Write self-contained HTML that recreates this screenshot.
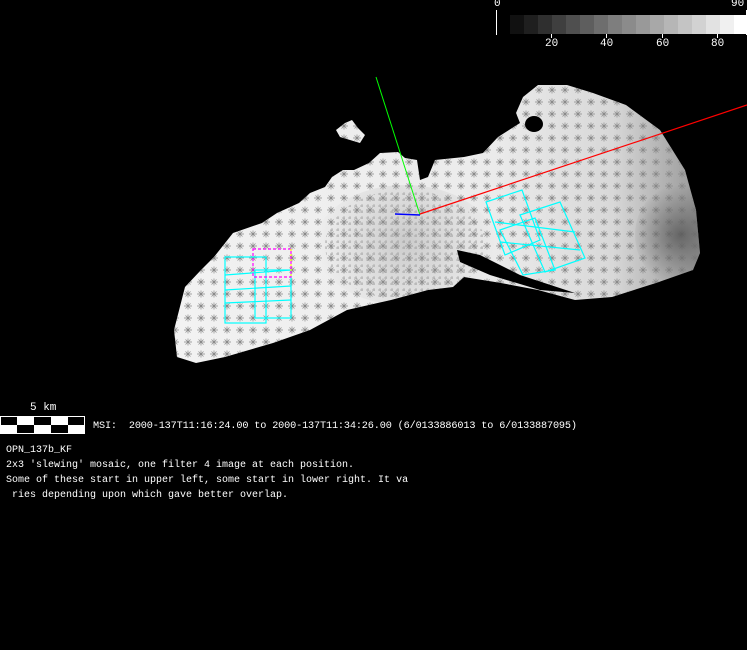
<!DOCTYPE html>
<html><head><meta charset="utf-8"><style>
html,body{margin:0;padding:0;background:#000;width:747px;height:650px;overflow:hidden;position:relative}
.t{position:absolute;color:#fff;font-family:"Liberation Mono",monospace;font-size:10px;white-space:pre;line-height:15px}
</style></head><body>
<svg width="747" height="650" style="position:absolute;left:0;top:0">
<defs>
<pattern id="m" width="13" height="12" patternUnits="userSpaceOnUse">
<path d="M2 6h8M6 2.5v7M3.5 3.5l5 5M8.5 3.5l-5 5" stroke="#888" stroke-width="0.7" fill="none"/>
</pattern>
<pattern id="d" width="6" height="6" patternUnits="userSpaceOnUse">
<path d="M0 2h3M2 0v3" stroke="#888" stroke-width="0.7"/>
</pattern>
<linearGradient id="g" x1="0" y1="0" x2="1" y2="0">
<stop offset="0" stop-color="#f2f2f2"/><stop offset="0.6" stop-color="#ebebeb"/><stop offset="0.82" stop-color="#d8d8d8"/><stop offset="1" stop-color="#909090"/>
</linearGradient>
<radialGradient id="r" cx="405" cy="240" r="90" gradientUnits="userSpaceOnUse">
<stop offset="0" stop-color="#999" stop-opacity="0.8"/><stop offset="1" stop-color="#999" stop-opacity="0"/>
</radialGradient>
<radialGradient id="r2" cx="680" cy="235" r="50" gradientUnits="userSpaceOnUse">
<stop offset="0" stop-color="#555" stop-opacity="0.8"/><stop offset="1" stop-color="#666" stop-opacity="0"/>
</radialGradient>
<clipPath id="c"><polygon points="174,330 185,287 201,270 214,257 233,233 262,223 277,213 299,203 310,193 325,187 332,177 343,170 354,170 369,163 380,153 398,152 405,158 417,160 420,180 428,177 435,160 464,157 483,153 498,137 520,123 516,113 523,97 538,85 567,85 593,93 626,105 660,130 685,170 696,210 700,253 693,270 656,283 612,297 575,300 538,290 501,283 464,277 453,287 428,290 391,300 347,310 310,330 273,343 225,357 196,363 177,357"/></clipPath>
</defs>
<g clip-path="url(#c)">
<rect x="170" y="80" width="540" height="290" fill="url(#g)"/>
<rect x="170" y="80" width="540" height="290" fill="url(#m)"/>
<ellipse cx="405" cy="245" rx="80" ry="55" fill="url(#d)" opacity="0.7"/>
<ellipse cx="405" cy="245" rx="90" ry="60" fill="url(#r)" opacity="0.5"/>
<ellipse cx="680" cy="235" rx="45" ry="50" fill="url(#r2)"/>
</g>
<polygon points="336,130 345,123 352,120 358,128 365,135 360,143 350,140 340,137" fill="#eee"/>
<polygon points="336,130 345,123 352,120 358,128 365,135 360,143 350,140 340,137" fill="url(#m)"/>
<ellipse cx="534" cy="124" rx="9" ry="8" fill="#000"/>
<polygon points="457,250 480,255 520,275 575,293 540,290 490,275 460,262" fill="#000"/>
<g fill="none" stroke="#0ff" stroke-width="1.2">
<rect x="225" y="257" width="41" height="66"/>
<rect x="255" y="270" width="36" height="48"/>
<line x1="225" y1="275" x2="291" y2="270"/><line x1="225" y1="290" x2="291" y2="286"/><line x1="225" y1="303" x2="291" y2="300"/>
<polygon points="486,202 522,190 540,240 505,255"/>
<polygon points="520,215 560,202 585,258 545,272"/>
<polygon points="500,230 535,218 555,270 523,275"/>
<line x1="495" y1="222" x2="575" y2="232"/><line x1="500" y1="242" x2="580" y2="250"/>
</g>
<rect x="253" y="249" width="38" height="28" fill="none" stroke="#f0f" stroke-width="1.2" stroke-dasharray="3,2"/>
<line x1="291" y1="249" x2="291" y2="277" stroke="#ff0" stroke-width="1.2" stroke-dasharray="2,3"/>
<line x1="376" y1="77" x2="420" y2="215" stroke="#0f0" stroke-width="1"/>
<line x1="420" y1="214" x2="747" y2="105" stroke="#f00" stroke-width="1.2"/>
<line x1="395" y1="214" x2="420" y2="215" stroke="#00f" stroke-width="1.5"/>
<g>
<line x1="496.5" y1="10" x2="496.5" y2="35" stroke="#fff"/>
<line x1="746.5" y1="10" x2="746.5" y2="35" stroke="#fff"/>
<rect x="510" y="15" width="14" height="19" fill="#111"/>
<rect x="524" y="15" width="14" height="19" fill="#1f1f1f"/>
<rect x="538" y="15" width="14" height="19" fill="#2f2f2f"/>
<rect x="552" y="15" width="14" height="19" fill="#3f3f3f"/>
<rect x="566" y="15" width="14" height="19" fill="#4f4f4f"/>
<rect x="580" y="15" width="14" height="19" fill="#5e5e5e"/>
<rect x="594" y="15" width="14" height="19" fill="#6e6e6e"/>
<rect x="608" y="15" width="14" height="19" fill="#7e7e7e"/>
<rect x="622" y="15" width="14" height="19" fill="#8b8b8b"/>
<rect x="636" y="15" width="14" height="19" fill="#999"/>
<rect x="650" y="15" width="14" height="19" fill="#a8a8a8"/>
<rect x="664" y="15" width="14" height="19" fill="#b6b6b6"/>
<rect x="678" y="15" width="14" height="19" fill="#c4c4c4"/>
<rect x="692" y="15" width="14" height="19" fill="#d2d2d2"/>
<rect x="706" y="15" width="14" height="19" fill="#e2e2e2"/>
<rect x="720" y="15" width="14" height="19" fill="#f0f0f0"/>
<rect x="734" y="15" width="12" height="19" fill="#fff"/>
<g stroke="#fff"><line x1="551.5" y1="34" x2="551.5" y2="38"/><line x1="606.5" y1="34" x2="606.5" y2="38"/><line x1="662.5" y1="34" x2="662.5" y2="38"/><line x1="717.5" y1="34" x2="717.5" y2="38"/></g>
</g>
<rect x="0.5" y="416.5" width="84" height="17" fill="#fff" stroke="#fff"/>
<g fill="#000">
<rect x="1" y="417" width="16" height="8"/><rect x="34" y="417" width="17" height="8"/><rect x="68" y="417" width="16" height="8"/>
<rect x="17" y="425" width="17" height="8"/><rect x="51" y="425" width="17" height="8"/>
</g>
</svg>
<div class="t" style="left:494px;top:-3px;font-size:11px">0</div>
<div class="t" style="left:731px;top:-3px;font-size:11px">90</div>
<div class="t" style="left:545px;top:37px;font-size:11px">20</div>
<div class="t" style="left:600px;top:37px;font-size:11px">40</div>
<div class="t" style="left:656px;top:37px;font-size:11px">60</div>
<div class="t" style="left:711px;top:37px;font-size:11px">80</div>
<div class="t" style="left:30px;top:401px;font-size:11px">5 km</div>
<div class="t" style="left:93px;top:419px;font-size:10.2px;letter-spacing:-0.14px">MSI:  2000-137T11:16:24.00 to 2000-137T11:34:26.00 (6/0133886013 to 6/0133887095)</div>
<div class="t" style="left:6px;top:443px;font-size:10px">OPN_137b_KF
2x3 'slewing' mosaic, one filter 4 image at each position.
Some of these start in upper left, some start in lower right. It va
 ries depending upon which gave better overlap.</div>
</body></html>
